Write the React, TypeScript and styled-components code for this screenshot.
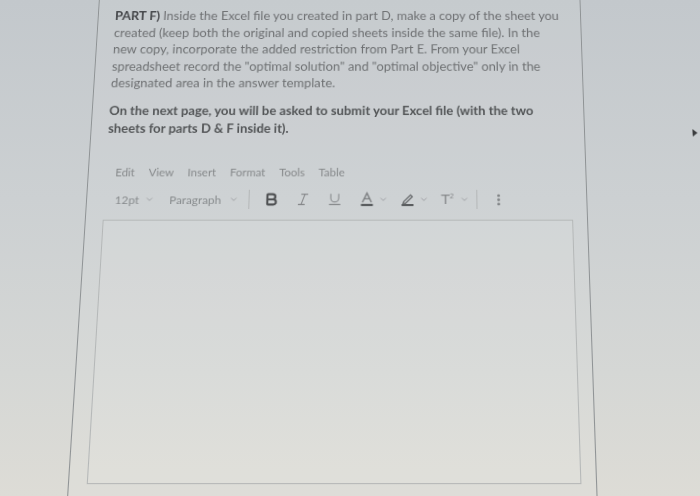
import React from "react";
import styled, { createGlobalStyle } from "styled-components";
import { Bold, Italic, Underline, ChevronDown, EllipsisVertical } from "lucide-react";

const GlobalStyle = createGlobalStyle`
  html, body {
    margin: 0;
    padding: 0;
    width: 700px;
    height: 496px;
    overflow: hidden;
  }
  body {
    background: linear-gradient(180deg, #c3c8cc 0%, #ccd0d2 40%, #d5d7d5 75%, #dddcd6 100%);
    font-family: Lato, "Open Sans", "Noto Sans", sans-serif;
  }
`;

// the photo is taken at an angle: lay the page out flat, then tilt it
const Screen = styled.div`
  width: 706px;
  height: 548px;
  display: flex;
  transform-origin: 412px 300px;
  transform: translateY(-52px) perspective(1000px) rotateX(11deg);
`;

const Gutter = styled.div`
  width: 83px;
  flex-shrink: 0;
`;

const Panel = styled.div`
  width: 506px;
  flex-shrink: 0;
  border-left: 1px solid #8e9294;
  border-right: 1px solid #8e9294;
  background: rgba(255, 255, 255, 0.05);
  padding: 43px 0 0 17px;
  box-sizing: border-box;
  display: flex;
  flex-direction: column;
`;

const Side = styled.div`
  flex: 1;
  display: flex;
  justify-content: flex-end;
  align-items: flex-start;
  padding-top: 176px;
`;

const EdgeMark = styled.span`
  width: 0;
  height: 0;
  border-top: 4px solid transparent;
  border-bottom: 4px solid transparent;
  border-left: 5px solid #3a3c3e;
  margin-right: 2px;
`;

const Para = styled.p<{ $bold?: boolean; $gap?: number }>`
  margin: ${(p) => p.$gap ?? 0}px 0 0 0;
  width: 472px;
  font-size: 13.3px;
  line-height: 18.6px;
  font-weight: ${(p) => (p.$bold ? 700 : 400)};
  color: ${(p) => (p.$bold ? "#525456" : "#6e7072")};
`;

const Lead = styled.b`
  color: #45474a;
`;

const MenuBar = styled.div`
  display: flex;
  align-items: center;
  height: 20px;
  margin-top: 27px;
  padding-left: 3px;
`;

const MenuItem = styled.span`
  font-size: 11.5px;
  color: #85888a;
  padding: 0 7px;
`;

const Toolbar = styled.div`
  display: flex;
  align-items: center;
  height: 24px;
  margin-top: 7px;
`;

const Select = styled.div<{ $width: number; $lead: number; $trail: number }>`
  display: flex;
  align-items: center;
  justify-content: space-between;
  width: ${(p) => p.$width}px;
  padding: 0 ${(p) => p.$trail}px 0 ${(p) => p.$lead}px;
  box-sizing: border-box;
  font-size: 11.8px;
  color: #868a8c;
`;

const Divider = styled.span<{ $left: number }>`
  width: 1px;
  height: 20px;
  background: #b3b6b7;
  margin-left: ${(p) => p.$left}px;
`;

const IconButton = styled.div<{ $tone: string; $left?: number }>`
  width: 32px;
  margin-left: ${(p) => p.$left ?? 0}px;
  display: flex;
  justify-content: center;
  align-items: center;
  color: ${(p) => p.$tone};
`;

const SplitButton = styled.div<{ $tone: string }>`
  width: 41px;
  display: flex;
  align-items: center;
  gap: 4px;
  padding-left: 8px;
  box-sizing: border-box;
  color: ${(p) => p.$tone};
`;

const Caret = styled(ChevronDown)`
  color: #9a9da0;
  flex-shrink: 0;
`;

const Glyph = styled.span`
  width: 16px;
  display: flex;
  justify-content: center;
  flex-shrink: 0;
`;

const Sup = styled.span`
  font-size: 14px;
  color: #85888a;
  font-family: "DejaVu Sans", sans-serif;
  line-height: 1;
  & sup {
    font-size: 7px;
    vertical-align: 6px;
  }
`;

const Editor = styled.div`
  margin-top: 9px;
  width: 473px;
  height: 259px;
  border: 1px solid #b4b7b7;
  box-sizing: border-box;
  background: rgba(255, 255, 255, 0.06);
`;

const FontColorIcon = () => (
  <svg width="15" height="16" viewBox="0 0 15 16">
    <path d="M3 11 L7.5 1.5 L12 11 M5 7.4 H10" fill="none" stroke="#7a7d7f" strokeWidth="1.4" />
    <rect x="1.5" y="12.8" width="12" height="2.2" fill="#5b5e60" />
  </svg>
);

const HighlightIcon = () => (
  <svg width="15" height="16" viewBox="0 0 15 16">
    <path d="M3.5 10.5 L10.5 3.5 L12.3 5.3 L5.3 12.3 L3 12.3 Z" fill="none" stroke="#6f7274" strokeWidth="1.4" />
    <rect x="1.5" y="13" width="12" height="2" fill="#5b5e60" />
  </svg>
);

const menu = ["Edit", "View", "Insert", "Format", "Tools", "Table"];

export default function App() {
  return (
    <>
      <GlobalStyle />
      <Screen>
        <Gutter />
        <Panel>
          <Para>
            <Lead>PART F)</Lead> Inside the Excel file you created in part D, make a copy of the sheet you
            created (keep both the original and copied sheets inside the same file). In the new copy,
            incorporate the added restriction from Part E. From your Excel spreadsheet record the "optimal
            solution" and "optimal objective" only in the designated area in the answer template.
          </Para>
          <Para $bold $gap={11}>
            On the next page, you will be asked to submit your Excel file (with the two sheets for parts D
            &amp; F inside it).
          </Para>
          <MenuBar>
            {menu.map((m) => (
              <MenuItem key={m}>{m}</MenuItem>
            ))}
          </MenuBar>
          <Toolbar>
            <Select $width={58} $lead={11} $trail={7}>
              12pt <Caret size={10} strokeWidth={2.2} />
            </Select>
            <Select $width={79} $lead={8} $trail={1}>
              Paragraph <Caret size={10} strokeWidth={2.2} />
            </Select>
            <Divider $left={9} />
            <IconButton $tone="#4f5153" $left={6}>
              <Bold size={16} strokeWidth={3.2} />
            </IconButton>
            <IconButton $tone="#87898b">
              <Italic size={16} strokeWidth={1.7} />
            </IconButton>
            <IconButton $tone="#8a8d8f">
              <Underline size={16} strokeWidth={1.7} />
            </IconButton>
            <SplitButton $tone="#7d8082">
              <Glyph>
                <FontColorIcon />
              </Glyph>
              <Caret size={10} strokeWidth={2.2} />
            </SplitButton>
            <SplitButton $tone="#727577">
              <Glyph>
                <HighlightIcon />
              </Glyph>
              <Caret size={10} strokeWidth={2.2} />
            </SplitButton>
            <SplitButton $tone="#8a8d8f">
              <Glyph>
                <Sup>
                  T<sup>2</sup>
                </Sup>
              </Glyph>
              <Caret size={10} strokeWidth={2.2} />
            </SplitButton>
            <Divider $left={4} />
            <IconButton $tone="#7d8082" $left={5}>
              <EllipsisVertical size={15} strokeWidth={2.6} />
            </IconButton>
          </Toolbar>
          <Editor />
        </Panel>
        <Side>
          <EdgeMark />
        </Side>
      </Screen>
    </>
  );
}
